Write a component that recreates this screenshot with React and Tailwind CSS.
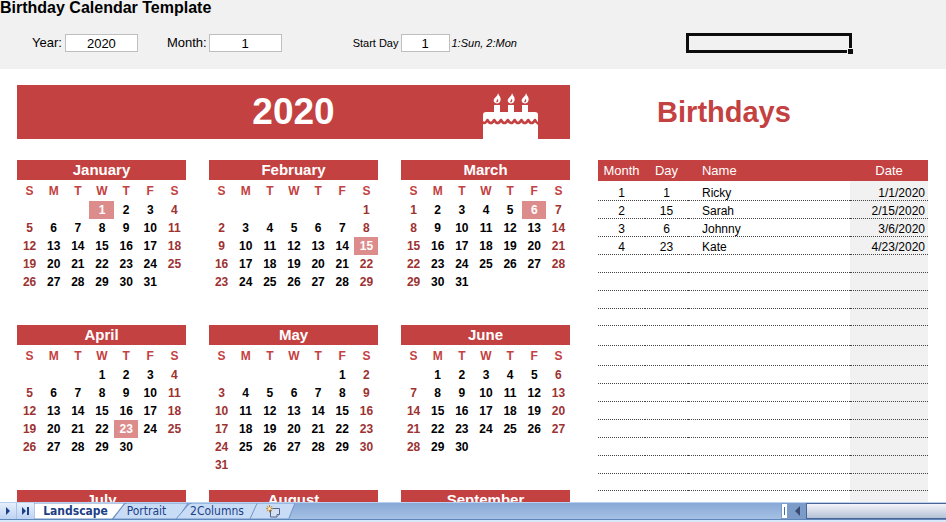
import React, { useState } from 'react'

const weekdays = ['S', 'M', 'T', 'W', 'T', 'F', 'S'];

const monthNames = [
  'January',
  'February',
  'March',
  'April',
  'May',
  'June',
  'July',
  'August',
  'September',
  'October',
  'November',
  'December',
];

const birthdays = [
  { month: 1, day: 1, name: 'Ricky' },
  { month: 2, day: 15, name: 'Sarah' },
  { month: 3, day: 6, name: 'Johnny' },
  { month: 4, day: 23, name: 'Kate' },
];

// one entry per line of the birthday list
const rowHeights = [
  'h-[19px]', 'h-[18px]', 'h-[18px]', 'h-[18px]', 'h-[18px]', 'h-[18px]',
  'h-[18px]', 'h-[17px]', 'h-[20px]', 'h-[20px]', 'h-[18px]', 'h-[18px]',
  'h-[18px]', 'h-[18px]', 'h-[18px]', 'h-[18px]', 'h-[17px]', 'h-[18px]',
];

function getWeeks(year, month, startDay) {
  const offset = (new Date(year, month - 1, 1).getDay() - (startDay - 1) + 7) % 7;
  const total = new Date(year, month, 0).getDate();
  return [0, 1, 2, 3, 4, 5].map((week) =>
    [0, 1, 2, 3, 4, 5, 6].map((col) => {
      const day = week * 7 + col - offset + 1;
      return day >= 1 && day <= total ? day : null;
    })
  );
}

function Cake() {
  return (
    <svg viewBox="0 0 55 47" className="h-[47px] w-[55px]" fill="#fff" aria-hidden="true">
      {[14, 28, 42].map((x) => (
        <g key={x} transform={`translate(${x} 1)`}>
          <path d="M1 0 C2 3 4 4 3.6 7 C3.3 9.5 1.5 10.5 0 10.5 C-2.6 10.3 -4 8.3 -2.9 6 C-2 4.3 0.8 3.2 1 0 Z" />
          <path d="M-0.2 9.6 C-1.6 8.4 0.6 7.2 0.6 5.6 C1.8 7.4 1.4 9 -0.2 9.6 Z" fill="#c44141" />
          <rect x="-3" y="12" width="6" height="9" />
        </g>
      ))}
      <path d="M3 20 H52 Q55 20 55 23 V47 H0 V23 Q0 20 3 20 Z" />
      <path
        d="M-2 28 Q1.200 34 4.400 28 Q7.800 34 11.200 28 Q14.600 34 18 28 Q21.400 34 24.800 28 Q28.200 34 31.600 28 Q35 34 38.400 28 Q41.800 34 45.200 28 Q48.600 34 52 28 Q54 32 57 32"
        fill="none"
        stroke="#c44141"
        strokeWidth="2.6"
        strokeLinejoin="round"
      />
    </svg>
  );
}

function Month({ year, month, startDay }) {
  const start = startDay - 1;
  return (
    <table className="w-full table-fixed border-collapse text-center text-[12px] font-bold">
      <caption className="h-5 bg-[#c44141] text-[15px] leading-5 text-white">
        {monthNames[month - 1]}
      </caption>
      <thead>
        <tr className="h-[21px] text-[#c44141]">
          {weekdays.map((_, i) => (
            <th key={i} className="p-0 pl-px leading-[18px]">{weekdays[(i + start) % 7]}</th>
          ))}
        </tr>
      </thead>
      <tbody>
        {getWeeks(year, month, startDay).map((week, key) => (
          <tr key={key} className="h-[18px]">
            {week.map((day, i) => {
              const weekend = (i + start) % 7 === 0 || (i + start) % 7 === 6;
              const marked = day && birthdays.some((b) => b.month === month && b.day === day);
              const color = marked ? 'bg-[#dd8c8c] text-white' : weekend ? 'text-[#9c3232]' : 'text-black';
              return (
                <td key={i} className={`p-0 pl-px leading-[18px] ${color}`}>{day}</td>
              );
            })}
          </tr>
        ))}
      </tbody>
    </table>
  );
}

function BirthdayList({ year }) {
  return (
    <table className="w-full table-fixed border-collapse text-[12px] text-black">
      <colgroup>
        <col className="w-[47px]" />
        <col className="w-[43px]" />
        <col />
        <col className="w-[78px]" />
      </colgroup>
      <thead>
        <tr className="h-[21px] bg-[#c44141] text-[13px] text-white">
          <th className="p-0 text-center font-normal leading-5">Month</th>
          <th className="p-0 text-center font-normal leading-5">Day</th>
          <th className="p-0 pl-3.5 text-left font-normal leading-5">Name</th>
          <th className="p-0 text-center font-normal leading-5">Date</th>
        </tr>
      </thead>
      <tbody>
        {rowHeights.map((height, key) => {
          const item = birthdays[key];
          return (
            <tr key={key} className={`${height} border-b border-dotted border-[#444] align-bottom leading-[14px]`}>
              <td className="p-0 text-center">{item && item.month}</td>
              <td className="p-0 text-center">{item && item.day}</td>
              <td className="p-0 pl-3.5">{item && item.name}</td>
              <td className="bg-[#f1f1f1] p-0 pr-[3px] text-right">
                {item && `${item.month}/${item.day}/${year}`}
              </td>
            </tr>
          );
        })}
      </tbody>
    </table>
  );
}

function Settings({ year, setYear, month, setMonth, startDay, setStartDay }) {
  const field = 'h-[18px] border border-[#bfbfbf] bg-white text-center text-[13px] leading-4 text-black outline-none';
  return (
    <header className="h-[69px] shrink-0 bg-[#f1f1f1] text-black">
      <h1 className="h-[33px] text-[16px] font-bold leading-4">Birthday Calendar Template</h1>
      <div className="flex h-5 items-center pl-8 text-[13px]">
        <label htmlFor="year" className="mr-[3px]">Year:</label>
        <input id="year" className={`w-[73px] ${field}`} value={year} onChange={(e) => setYear(e.target.value)} />
        <label htmlFor="month" className="ml-[29px] mr-0.5">Month:</label>
        <input id="month" className={`w-[73px] ${field}`} value={month} onChange={(e) => setMonth(e.target.value)} />
        <label htmlFor="start" className="ml-[71px] mr-0.5 text-[11px]">Start Day</label>
        <input id="start" className={`w-[49px] ${field}`} value={startDay} onChange={(e) => setStartDay(e.target.value)} />
        <span className="ml-0.5 text-[11px] italic">1:Sun, 2:Mon</span>
        <div className="relative ml-auto mr-[94px] h-5 w-[166px] border-3 border-[#0d0d0d]">
          <span className="absolute -bottom-1 -right-1 size-1.5 border-l border-t border-[#f1f1f1] bg-[#0d0d0d]" />
        </div>
      </div>
    </header>
  );
}

function SheetTab({ children, width, first, active, onClick, label }) {
  return (
    <button
      type="button"
      aria-label={label}
      onClick={onClick}
      className={`relative h-4 ${width} ${first ? '' : '-ml-3'} ${active ? 'z-10 font-bold' : ''}`}
    >
      <svg viewBox="0 0 100 16" preserveAspectRatio="none" className="absolute inset-0 size-full" aria-hidden="true">
        <path
          d={first ? 'M0 16 V0 H100 L86 16 Z' : 'M0 16 L14 2 Q16 0 19 0 H100 L86 16 Z'}
          fill={active ? '#fff' : '#c9dcf6'}
          stroke="#6f94c8"
          vectorEffect="non-scaling-stroke"
        />
      </svg>
      <span className="relative flex h-4 items-center justify-center leading-4">{children}</span>
    </button>
  );
}

function SheetBar() {
  const [sheet, setSheet] = useState('Landscape');
  return (
    <footer className="h-5 shrink-0 border-t border-[#b9d1f3] bg-[#d9e7fa] font-['DejaVu_Sans_Condensed','DejaVu_Sans',sans-serif] text-[12px] text-[#1c3f87]">
      <div className="flex h-[17px] border-b border-[#5f86bb] bg-linear-to-b from-[#88a9d6] to-[#a5c0e4]">
        <div className="flex w-[34px] bg-linear-to-b from-[#e6effc] to-[#bdd3f2]">
          <button type="button" aria-label="Next sheet" className="flex w-[17px] items-center justify-center border-r border-[#a9c3e8]">
            <svg viewBox="0 0 4 8" className="h-2 w-1" fill="#1c3f87"><path d="M0 0 L4 4 L0 8 Z" /></svg>
          </button>
          <button type="button" aria-label="Last sheet" className="flex w-[17px] items-center justify-center">
            <svg viewBox="0 0 7 8" className="h-2 w-[7px]" fill="#1c3f87"><path d="M0 0 L4 4 L0 8 Z M5 0 H7 V8 H5 Z" /></svg>
          </button>
        </div>
        <SheetTab width="w-[91px] pr-2" first active={sheet === 'Landscape'} onClick={() => setSheet('Landscape')}>Landscape</SheetTab>
        <SheetTab width="w-[75px] pr-2" active={sheet === 'Portrait'} onClick={() => setSheet('Portrait')}>Portrait</SheetTab>
        <SheetTab width="w-[86px] pr-1" active={sheet === '2Columns'} onClick={() => setSheet('2Columns')}>2Columns</SheetTab>
        <SheetTab width="w-[45px]" label="Insert sheet">
          <svg viewBox="0 0 14 13" className="h-[13px] w-[14px]" aria-hidden="true">
            <path d="M4.500 3.500 H13.500 V9.500 L11 12 H4.500 Z" fill="#d5e0f2" stroke="#50658c" />
            <path d="M13.500 9.500 H11 V12" fill="#fff" stroke="#50658c" />
            <path d="M3.500 0 V7.400 M0 3.700 H7.200 M1 1.200 L6 6.200 M6 1.200 L1 6.200" stroke="#c9801f" />
            <circle cx="3.500" cy="3.700" r="1.400" fill="#fff3c4" />
          </svg>
        </SheetTab>
        <div className="ml-auto flex w-[165px] bg-[#7b9bc8]">
          <div className="flex w-[7px] items-center justify-center border border-[#7d9dc6] bg-white">
            <span className="h-2 w-px bg-[#3f72b5]" />
          </div>
          <button type="button" aria-label="Scroll left" className="flex w-[18px] items-center justify-center">
            <svg viewBox="0 0 5 10" className="h-2.5 w-[5px]" fill="#3c4a70"><path d="M5 0 L0 5 L5 10 Z" /></svg>
          </button>
          <div className="flex-1 border border-r-0 border-[#4b6492] bg-linear-to-b from-[#f3f4fa] via-[#d5dbe8] to-[#b3c1d6]" />
        </div>
      </div>
    </footer>
  );
}

export default function App() {
  const [year, setYear] = useState('2020');
  const [month, setMonth] = useState('1');
  const [startDay, setStartDay] = useState('1');
  const firstMonth = Math.min(Math.max(Number(month) || 1, 1), 12);
  const firstDay = Number(startDay) === 2 ? 2 : 1;

  return (
    <div className="flex h-screen flex-col overflow-hidden bg-white font-['Liberation_Sans',Arial,sans-serif]">
      <Settings
        year={year}
        setYear={setYear}
        month={month}
        setMonth={setMonth}
        startDay={startDay}
        setStartDay={setStartDay}
      />

      <main className="flex min-h-0 flex-1 gap-7 overflow-hidden pl-[17px] pr-[18px] pt-4">
        <section className="min-w-0 flex-[62]">
          <div className="grid h-[54px] grid-cols-3 items-end bg-[#c44141]">
            <h2 className="col-start-2 self-center text-center text-[37px] font-bold leading-[54px] text-white">{year}</h2>
            <div className="flex justify-end pr-8">
              <Cake />
            </div>
          </div>
          <div className="mt-[21px] grid grid-cols-3 gap-x-[23px] gap-y-4">
            {monthNames.slice(0, 9).map((name, i) => (
              <Month key={name} year={Number(year)} month={((firstMonth - 1 + i) % 12) + 1} startDay={firstDay} />
            ))}
          </div>
        </section>

        <section className="min-w-0 flex-[37]">
          <h2 className="h-[75px] pr-[78px] text-center text-[29px] font-bold leading-[54px] text-[#c44141]">Birthdays</h2>
          <BirthdayList year={year} />
        </section>
      </main>

      <SheetBar />
    </div>
  );
}
